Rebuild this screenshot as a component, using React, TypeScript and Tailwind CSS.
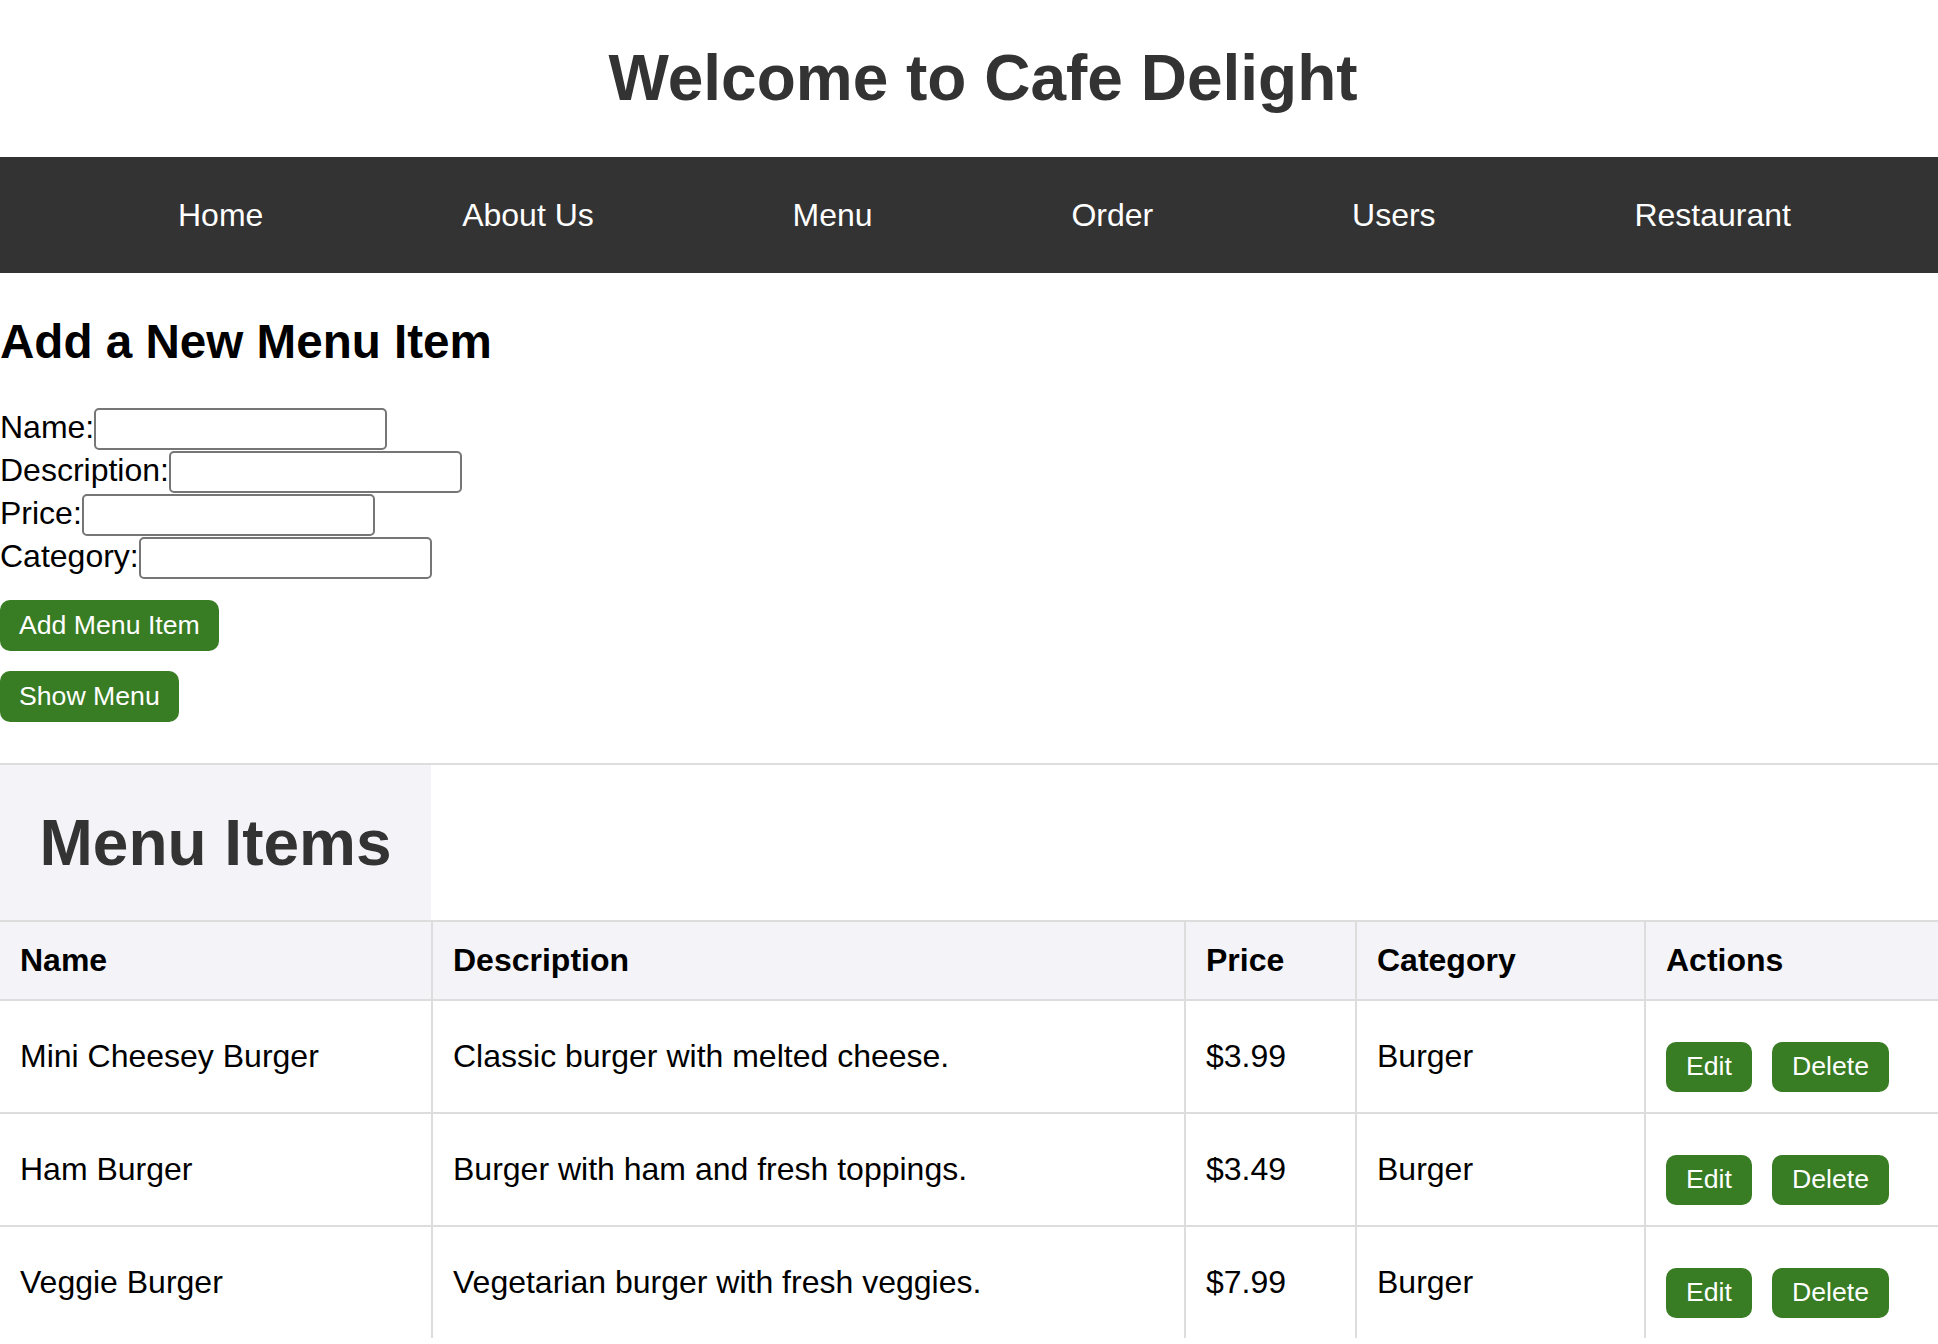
import React from "react";

const items = [
  { name: "Mini Cheesey Burger", desc: "Classic burger with melted cheese.", price: "$3.99", cat: "Burger" },
  { name: "Ham Burger", desc: "Burger with ham and fresh toppings.", price: "$3.49", cat: "Burger" },
  { name: "Veggie Burger", desc: "Vegetarian burger with fresh veggies.", price: "$7.99", cat: "Burger" },
];

const navItems = ["Home", "About Us", "Menu", "Order", "Users", "Restaurant"];

function Field({ label }: { label: string }) {
  return (
    <div className="flex items-baseline h-[43px]">
      <span className="text-[32px] leading-[37px] text-black">{label}</span>
      <input
        type="text"
        className="h-[42px] w-[293px] border-2 border-[#767676] rounded-[5px] bg-white px-[4px] text-[26.67px] leading-[31px]"
      />
    </div>
  );
}

function GreenButton({ children }: { children: React.ReactNode }) {
  return (
    <button className="h-[51px] px-[19px] bg-[#387c23] text-white text-[26.67px] leading-[31px] rounded-[10px]">
      {children}
    </button>
  );
}

export default function App() {
  return (
    <div className="w-[1938px] min-h-[1344px] bg-white font-['Liberation_Sans',Arial,sans-serif] text-black">
      <h1 className="pt-[41px] pb-[42px] text-center text-[64px] leading-[74px] font-bold text-[#333333] pl-[28px]">
        Welcome to Cafe Delight
      </h1>
      <nav className="h-[116px] bg-[#333333] flex items-center pl-[178px] gap-[198.8px]">
        {navItems.map((n) => (
          <span key={n} className="text-white text-[32px] leading-[37px]">
            {n}
          </span>
        ))}
      </nav>
      <h2 className="mt-[41px] text-[47.6px] leading-[55px] font-bold">Add a New Menu Item</h2>
      <div className="mt-[39px]">
        <Field label="Name:" />
        <Field label="Description:" />
        <Field label="Price:" />
        <Field label="Category:" />
      </div>
      <div className="mt-[20px] flex flex-col items-start gap-[20px]">
        <GreenButton>Add Menu Item</GreenButton>
        <GreenButton>Show Menu</GreenButton>
      </div>
      <div className="mt-[41px] border-t-2 border-[#dddddd]">
        <div className="w-[431px] h-[155px] bg-[#f4f4f8] flex items-center justify-center">
          <span className="text-[64px] leading-[74px] font-bold text-[#333333]">Menu Items</span>
        </div>
        <div className="grid grid-cols-[431px_753px_171px_289px_294px] border-t-2 border-[#dddddd] bg-[#f4f4f8]">
          {["Name", "Description", "Price", "Category", "Actions"].map((h, i) => (
            <div
              key={h}
              className={
                "h-[77px] flex items-center px-[20px] text-[32px] leading-[37px] font-bold border-[#dddddd] " +
                (i > 0 ? "border-l-2" : "")
              }
            >
              {h}
            </div>
          ))}
        </div>
        {items.map((it) => (
          <div
            key={it.name}
            className="grid grid-cols-[431px_753px_171px_289px_294px] border-t-2 border-[#dddddd] bg-white"
          >
            <div className="h-[111px] flex items-center px-[20px] text-[32px] leading-[37px]">{it.name}</div>
            <div className="h-[111px] flex items-center px-[20px] text-[32px] leading-[37px] border-l-2 border-[#dddddd]">
              {it.desc}
            </div>
            <div className="h-[111px] flex items-center px-[20px] text-[32px] leading-[37px] border-l-2 border-[#dddddd]">
              {it.price}
            </div>
            <div className="h-[111px] flex items-center px-[20px] text-[32px] leading-[37px] border-l-2 border-[#dddddd]">
              {it.cat}
            </div>
            <div className="h-[111px] flex items-center px-[20px] border-l-2 border-[#dddddd]">
              <div className="flex gap-[20px] mt-[20px]">
                <button className="h-[50px] px-[20px] bg-[#387c23] text-white text-[26.67px] leading-[31px] rounded-[10px]">
                  Edit
                </button>
                <button className="h-[50px] px-[20px] bg-[#387c23] text-white text-[26.67px] leading-[31px] rounded-[10px]">
                  Delete
                </button>
              </div>
            </div>
          </div>
        ))}
      </div>
    </div>
  );
}
